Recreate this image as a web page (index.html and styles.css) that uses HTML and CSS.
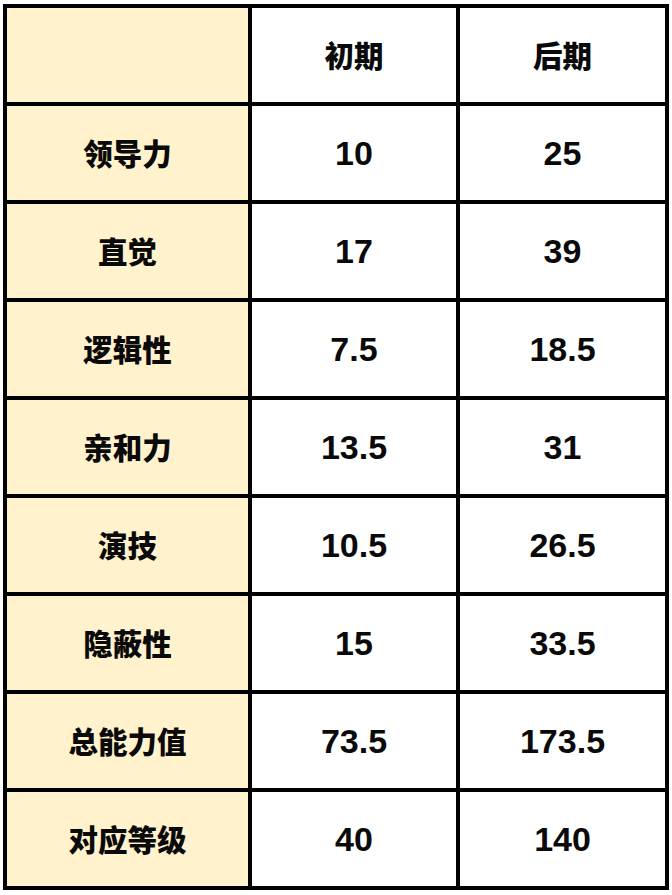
FILE: index.html
```html
<!DOCTYPE html>
<html lang="zh">
<head>
<meta charset="utf-8">
<link rel="stylesheet" href="styles.css">
</head>
<body>
<table class="stats">
  <tr><td class="label"></td><td class="zh">初期</td><td class="zh">后期</td></tr>
  <tr><td class="label zh">领导力</td><td>10</td><td>25</td></tr>
  <tr><td class="label zh">直觉</td><td>17</td><td>39</td></tr>
  <tr><td class="label zh">逻辑性</td><td>7.5</td><td>18.5</td></tr>
  <tr><td class="label zh">亲和力</td><td>13.5</td><td>31</td></tr>
  <tr><td class="label zh">演技</td><td>10.5</td><td>26.5</td></tr>
  <tr><td class="label zh">隐蔽性</td><td>15</td><td>33.5</td></tr>
  <tr><td class="label zh">总能力值</td><td>73.5</td><td>173.5</td></tr>
  <tr><td class="label zh">对应等级</td><td>40</td><td>140</td></tr>
</table>
</body>
</html>
```
FILE: styles.css
```css
html, body {
  margin: 0;
  padding: 0;
  background: #ffffff;
}
body {
  padding: 4px 0 0 3px;
}
.stats {
  border-collapse: collapse;
  font-family: "Liberation Sans", Arial, "Noto Sans CJK SC", sans-serif;
  font-weight: bold;
  color: #0a0a0a;
}
.stats td {
  border: 4px solid #000000;
  height: 94px;
  padding: 0;
  text-align: center;
  vertical-align: middle;
  font-size: 34px;
  width: 205px;
  line-height: 1;
  box-sizing: content-box;
}
.stats td.label {
  width: 241px;
  background: #fff2cc;
}
.stats td.zh {
  font-family: "Noto Sans CJK SC", sans-serif;
  font-size: 29.5px;
  font-weight: 900;
}
.stats tr td:nth-child(2) {
  width: 204px;
}
```
